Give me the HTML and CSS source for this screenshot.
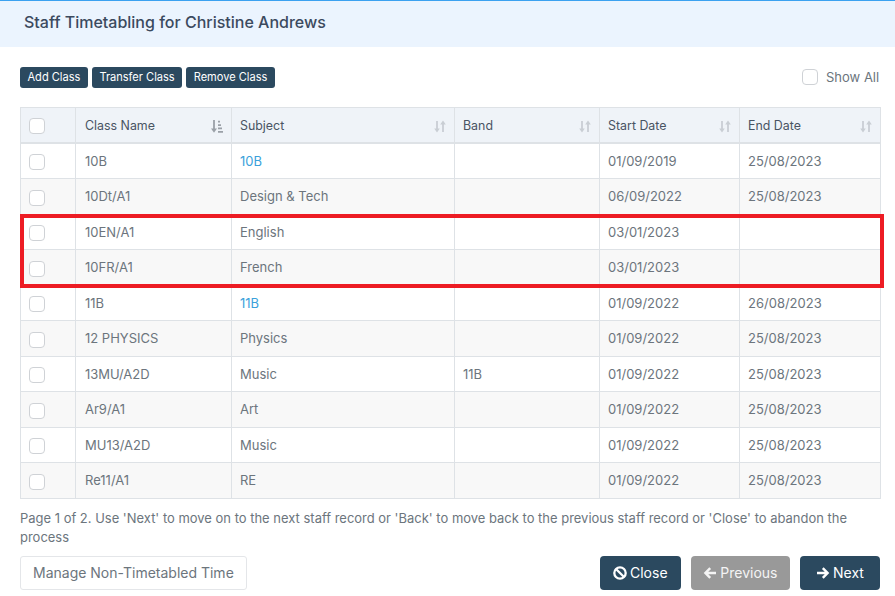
FILE: index.html
```html
<!DOCTYPE html>
<html lang="en">
<head>
<meta charset="utf-8">
<title>Staff Timetabling</title>
<link rel="stylesheet" href="styles.css">
</head>
<body>
<header class="head"><h1>Staff Timetabling for Christine Andrews</h1></header>
<main class="content">
  <div class="toolbar">
    <div class="tools">
      <button class="btn-s">Add Class</button>
      <button class="btn-s">Transfer Class</button>
      <button class="btn-s">Remove Class</button>
    </div>
    <label class="showall"><span class="cb"></span><span>Show All</span></label>
  </div>
  <div class="tablewrap">
    <table>
      <colgroup><col class="c1"><col class="c2"><col class="c3"><col class="c4"><col class="c5"><col class="c6"></colgroup>
      <thead>
        <tr>
          <th><span class="cb"></span></th>
          <th><div class="th">Class Name<svg class="sort active" viewBox="0 0 12 13"><path d="M3 0v10" stroke="currentColor" stroke-width="1.8"/><path d="M0 8.4h6L3 12.8z" fill="currentColor"/><path d="M7 .8h2v1.7H7zM7 4.2h3v1.7H7zM7 7.6h4v1.7H7zM7 11h5v1.7H7z" fill="currentColor"/></svg></div></th>
          <th><div class="th">Subject<svg class="sort" viewBox="0 0 12 13"><path d="M3 1v9.5M9 12V2.5" stroke="currentColor" stroke-width="1.8"/><path d="M.2 8.6h5.6L3 12.6zM6.2 4.4h5.6L9 .4z" fill="currentColor"/></svg></div></th>
          <th><div class="th">Band<svg class="sort" viewBox="0 0 12 13"><path d="M3 1v9.5M9 12V2.5" stroke="currentColor" stroke-width="1.8"/><path d="M.2 8.6h5.6L3 12.6zM6.2 4.4h5.6L9 .4z" fill="currentColor"/></svg></div></th>
          <th><div class="th">Start Date<svg class="sort" viewBox="0 0 12 13"><path d="M3 1v9.5M9 12V2.5" stroke="currentColor" stroke-width="1.8"/><path d="M.2 8.6h5.6L3 12.6zM6.2 4.4h5.6L9 .4z" fill="currentColor"/></svg></div></th>
          <th><div class="th">End Date<svg class="sort" viewBox="0 0 12 13"><path d="M3 1v9.5M9 12V2.5" stroke="currentColor" stroke-width="1.8"/><path d="M.2 8.6h5.6L3 12.6zM6.2 4.4h5.6L9 .4z" fill="currentColor"/></svg></div></th>
        </tr>
      </thead>
      <tbody>
        <tr><td><span class="cb"></span></td><td>10B</td><td><a href="#">10B</a></td><td></td><td>01/09/2019</td><td>25/08/2023</td></tr>
        <tr><td><span class="cb"></span></td><td>10Dt/A1</td><td>Design &amp; Tech</td><td></td><td>06/09/2022</td><td>25/08/2023</td></tr>
        <tr><td><span class="cb"></span></td><td>10EN/A1</td><td>English</td><td></td><td>03/01/2023</td><td></td></tr>
        <tr><td><span class="cb"></span></td><td>10FR/A1</td><td>French</td><td></td><td>03/01/2023</td><td></td></tr>
        <tr><td><span class="cb"></span></td><td>11B</td><td><a href="#">11B</a></td><td></td><td>01/09/2022</td><td>26/08/2023</td></tr>
        <tr><td><span class="cb"></span></td><td>12 PHYSICS</td><td>Physics</td><td></td><td>01/09/2022</td><td>25/08/2023</td></tr>
        <tr><td><span class="cb"></span></td><td>13MU/A2D</td><td>Music</td><td>11B</td><td>01/09/2022</td><td>25/08/2023</td></tr>
        <tr><td><span class="cb"></span></td><td>Ar9/A1</td><td>Art</td><td></td><td>01/09/2022</td><td>25/08/2023</td></tr>
        <tr><td><span class="cb"></span></td><td>MU13/A2D</td><td>Music</td><td></td><td>01/09/2022</td><td>25/08/2023</td></tr>
        <tr><td><span class="cb"></span></td><td>Re11/A1</td><td>RE</td><td></td><td>01/09/2022</td><td>25/08/2023</td></tr>
      </tbody>
    </table>
    <div class="highlight"></div>
  </div>
  <p class="note">Page 1 of 2. Use 'Next' to move on to the next staff record or 'Back' to move back to the previous staff record or 'Close' to abandon the process</p>
  <div class="actions">
    <button class="btn-outline">Manage Non-Timetabled Time</button>
    <div class="nav">
      <button class="btn close"><svg class="ico" viewBox="0 0 14 14"><circle cx="7" cy="7" r="5.7" fill="none" stroke="currentColor" stroke-width="2.3"/><path d="M3 3l8 8" stroke="currentColor" stroke-width="2.3"/></svg>Close</button>
      <button class="btn off"><svg class="ico" viewBox="0 0 14 14"><path d="M13 7H2.5M7.2 2.2L2.4 7l4.8 4.8" fill="none" stroke="currentColor" stroke-width="2.4"/></svg>Previous</button>
      <button class="btn next"><svg class="ico" viewBox="0 0 14 14"><path d="M1 7h10.5M6.8 2.2L11.6 7l-4.8 4.8" fill="none" stroke="currentColor" stroke-width="2.4"/></svg>Next</button>
    </div>
  </div>
</main>
</body>
</html>
```
FILE: styles.css
```css
* { box-sizing: border-box; }
html, body { margin: 0; padding: 0; }
body {
  width: 895px;
  height: 596px;
  overflow: hidden;
  background: #fff;
  font-family: Inter, "Liberation Sans", sans-serif;
  font-size: 13px;
  color: #6c757d;
}
button { font-family: inherit; cursor: pointer; }
.head {
  height: 47px;
  background: #ebf4fe;
  border-top: 1px solid #3ba1f0;
  padding: 0 24px;
  display: flex;
  align-items: center;
}
.head h1 { margin: 0 0 4px; font-size: 16px; font-weight: 500; color: #3b4a5e; }
.content { padding: 20px 15px 0 20px; }
.toolbar { display: flex; justify-content: space-between; align-items: center; height: 21px; }
.tools { display: flex; gap: 4px; }
.btn-s {
  height: 21px;
  padding: 0 7.5px 1px;
  border: 0;
  border-radius: 3px;
  background: #2b495f;
  color: #fff;
  font-size: 11.05px;
  font-weight: 400;
}
.showall { display: flex; align-items: center; gap: 8px; color: #6c757d; font-size: 13px; width: 78px; margin-bottom: 1px; }
.cb {
  display: block;
  width: 16px;
  height: 16px;
  border: 1px solid #cfd2d6;
  border-radius: 4px;
  background: #fff;
}
.tablewrap { position: relative; margin-top: 19px; width: 860px; }
table {
  width: 860px;
  table-layout: fixed;
  border-collapse: collapse;
  border: 1px solid #dee2e6;
}
.c1 { width: 55px; } .c2 { width: 156px; } .c3 { width: 223px; }
.c4 { width: 145px; } .c5 { width: 140px; } .c6 { width: 141px; }
th, td {
  border: 1px solid #dee2e6;
  padding: 0 8px;
  text-align: left;
  font-size: 13px;
  line-height: 19.5px;
}
th { height: 35.5px; padding-top: 2px; background: #eff3f8; color: #495463; font-weight: 400; border-bottom: 2px solid #dee2e6; font-size: 12.4px; }
td { height: 35.5px; padding-top: 1.6px; }
th:first-child, td:first-child { padding: 2px 0 0 8px; }
td:first-child { padding-top: 2.5px; }
th:nth-child(2), td:nth-child(2) { padding-left: 9px; }
tbody tr:nth-child(even) td { background: #f8f8f8; }
a { color: #3ba1db; text-decoration: none; }
.th { display: flex; justify-content: space-between; align-items: center; }
.sort { width: 12px; height: 13px; color: #c9ced4; }
.sort.active { color: #9aa0a7; }
.highlight {
  position: absolute;
  left: 0;
  top: 107px;
  width: 864px;
  height: 74px;
  border: 4px solid #ed1c24;
  pointer-events: none;
}
.note { margin: 10px 0 0; line-height: 19.5px; width: 860px; color: #6c757d; font-size: 12.98px; }
.actions { display: flex; justify-content: space-between; align-items: center; margin-top: 8px; width: 860px; }
.btn-outline {
  height: 34px;
  padding: 0 12px;
  background: #fff;
  border: 1px solid #e4e6e9;
  border-radius: 3px;
  color: #6c757d;
  font-size: 14px;
}
.nav { display: flex; gap: 10px; }
.btn {
  display: flex;
  align-items: center;
  justify-content: center;
  gap: 3px;
  height: 34px;
  padding: 0 12.5px;
  border: 0;
  border-radius: 4px;
  background: #2b495f;
  color: #fff;
  font-size: 14px;
}
.btn.off { background: #999; color: #f4f4f4; }
.btn.close { min-width: 81px; }
.btn.next { min-width: 80px; }
.ico { width: 14px; height: 14px; }
```
